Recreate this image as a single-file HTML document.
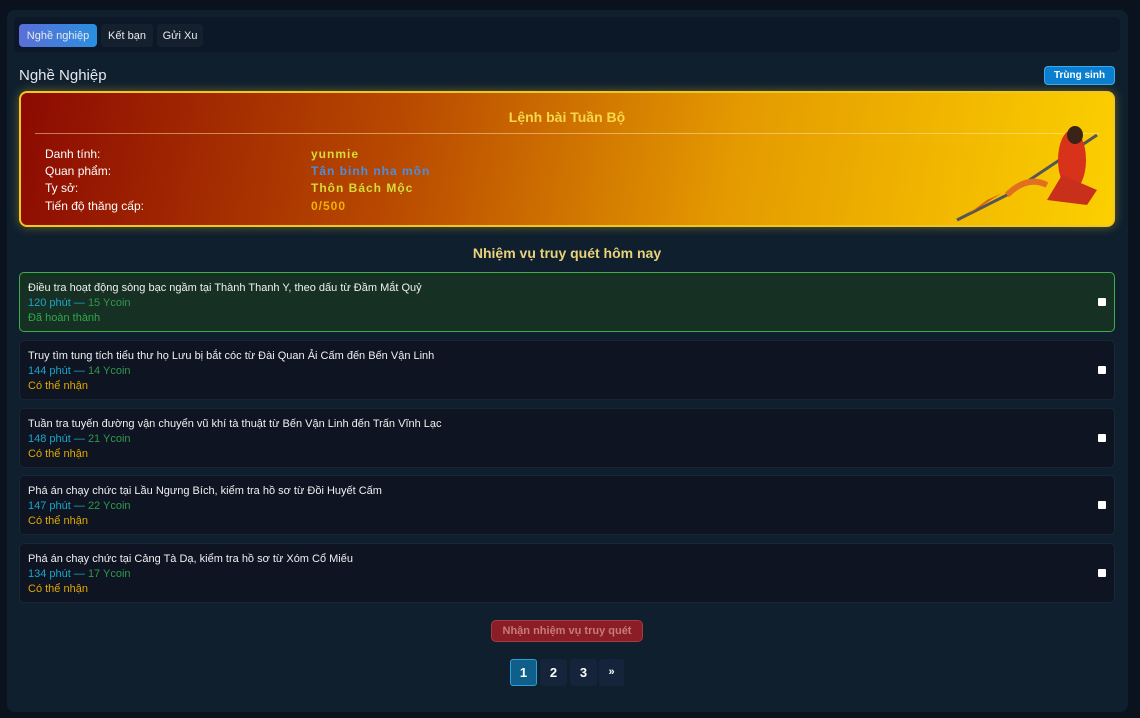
<!DOCTYPE html>
<html><head><meta charset="utf-8"><style>
*{box-sizing:border-box;margin:0;padding:0}
body{width:1140px;height:718px;background:#0a121d;font-family:"Liberation Sans",sans-serif;position:relative;overflow:hidden;color:#e6e9ee}
.panel{position:absolute;left:7px;top:10px;width:1121px;height:702px;background:#0f1f2e;border-radius:8px}
.tabs{position:absolute;left:14px;top:17px;width:1106px;height:35px;background:#0c1727;border-radius:6px}
.tab{position:absolute;top:24px;height:23px;border-radius:4px;font-size:11px;line-height:24px;text-align:center;background:#15202f;color:#e6e9ee}
.h{position:absolute;left:19px;top:67px;font-size:15px;color:#e6e9ee}
.tb{position:absolute;left:1044px;top:66px;width:71px;height:19px;border-radius:4px;background:#0a7fd0;border:1px solid #3aaaf0;font-size:10px;font-weight:bold;line-height:17px;text-align:center;color:#fff}
.card{position:absolute;left:19px;top:91px;width:1096px;height:136px;border-radius:8px;border:2px solid #f0c620;background:linear-gradient(100deg,#8c0a02 0%,#b94a00 35%,#e49a00 65%,#fcd000 100%);box-shadow:0 0 10px rgba(240,200,40,.4)}
.ct{position:absolute;left:0;width:100%;top:16px;text-align:center;font-size:14px;font-weight:bold;color:#f8d84a}
.line{position:absolute;left:14px;right:14px;top:40px;height:1px;background:rgba(255,230,180,.5)}
.lb{position:absolute;left:24px;font-size:12px;color:#fff}
.vl{position:absolute;left:290px;font-size:12px;font-weight:bold;letter-spacing:1px}
.sec{position:absolute;left:0;width:1134px;top:245px;text-align:center;font-size:14px;font-weight:bold;color:#e9d27a}
.q{position:absolute;left:19px;width:1096px;height:60px;border-radius:5px;background:#0e1422;border:1px solid #1a2636}
.q.done{background:#173024;border-color:#3bb04a}
.q .t{position:absolute;left:8px;top:9px;font-size:11px;color:#f0f0f0}
.q .m{position:absolute;left:8px;top:24px;font-size:11px;color:#1aa6c8}
.q .m b{font-weight:normal;color:#2e9a4c}
.q .s{position:absolute;left:8px;top:39px;font-size:11px;color:#e0a800}
.q.done .s{color:#2ea84c}
.cb{position:absolute;right:8px;top:25px;width:8px;height:8px;background:#fff;border-radius:1px}
.btn{position:absolute;left:491px;top:620px;width:152px;height:22px;border-radius:5px;background:#8a1d25;border:1px solid #a53a40;font-size:11px;font-weight:bold;line-height:20px;text-align:center;color:#c87a7c}
.pg{position:absolute;top:659px;width:27px;height:27px;border-radius:3px;background:#15243a;font-size:13px;font-weight:bold;line-height:27px;text-align:center;color:#fff}
</style></head><body>
<div class="panel"></div>
<div class="tabs"></div>
<div class="tab" style="left:19px;width:78px;background:linear-gradient(90deg,#5a6fd8,#2a8fe0)">Nghề nghiệp</div>
<div class="tab" style="left:101px;width:52px">Kết bạn</div>
<div class="tab" style="left:157px;width:46px">Gửi Xu</div>
<div class="h">Nghề Nghiệp</div>
<div class="tb">Trùng sinh</div>
<div class="card">
<div class="ct">Lệnh bài Tuần Bộ</div>
<div class="line"></div>
<div class="lb" style="top:54px">Danh tính:</div><div class="vl" style="top:54px;color:#d6dc3a">yunmie</div>
<div class="lb" style="top:71px">Quan phẩm:</div><div class="vl" style="top:71px;color:#4a8ee0">Tân binh nha môn</div>
<div class="lb" style="top:88px">Ty sở:</div><div class="vl" style="top:88px;color:#d6dc3a">Thôn Bách Mộc</div>
<div class="lb" style="top:106px">Tiến độ thăng cấp:</div><div class="vl" style="top:106px;color:#f0b400">0/500</div>
<svg style="position:absolute;right:6px;top:12px" width="160" height="120" viewBox="0 0 160 120">
<path d="M10 115 L60 90 L150 30" stroke="#555" stroke-width="3" fill="none"/>
<path d="M20 110 L55 88 L40 95Z" fill="#e05a10"/>
<ellipse cx="125" cy="55" rx="14" ry="30" fill="#d8321a"/>
<ellipse cx="128" cy="30" rx="8" ry="9" fill="#3a2418"/>
<path d="M115 70 L100 95 L140 100 L150 85Z" fill="#c8301c"/>
<path d="M60 90 Q80 70 100 80" stroke="#e07020" stroke-width="6" fill="none"/>
</svg>
</div>
<div class="sec">Nhiệm vụ truy quét hôm nay</div>
<div class="q done" style="top:272px"><div class="t">Điều tra hoạt động sòng bạc ngầm tại Thành Thanh Y, theo dấu từ Đầm Mắt Quỷ</div><div class="m">120 phút — <b>15 Ycoin</b></div><div class="s">Đã hoàn thành</div><div class="cb"></div></div>
<div class="q" style="top:340px"><div class="t">Truy tìm tung tích tiểu thư họ Lưu bị bắt cóc từ Đài Quan Ải Cấm đến Bến Vận Linh</div><div class="m">144 phút — <b>14 Ycoin</b></div><div class="s">Có thể nhận</div><div class="cb"></div></div>
<div class="q" style="top:408px"><div class="t">Tuần tra tuyến đường vận chuyển vũ khí tà thuật từ Bến Vận Linh đến Trấn Vĩnh Lạc</div><div class="m">148 phút — <b>21 Ycoin</b></div><div class="s">Có thể nhận</div><div class="cb"></div></div>
<div class="q" style="top:475px"><div class="t">Phá án chạy chức tại Lầu Ngưng Bích, kiểm tra hồ sơ từ Đồi Huyết Cấm</div><div class="m">147 phút — <b>22 Ycoin</b></div><div class="s">Có thể nhận</div><div class="cb"></div></div>
<div class="q" style="top:543px"><div class="t">Phá án chạy chức tại Cảng Tà Dạ, kiểm tra hồ sơ từ Xóm Cổ Miếu</div><div class="m">134 phút — <b>17 Ycoin</b></div><div class="s">Có thể nhận</div><div class="cb"></div></div>
<div class="btn">Nhận nhiệm vụ truy quét</div>
<div class="pg" style="left:510px;background:#105f8a;border:1px solid #2aa0d8;line-height:25px">1</div>
<div class="pg" style="left:540px">2</div>
<div class="pg" style="left:570px">3</div>
<div class="pg" style="left:599px;width:25px;font-size:11px">»</div>
</body></html>
